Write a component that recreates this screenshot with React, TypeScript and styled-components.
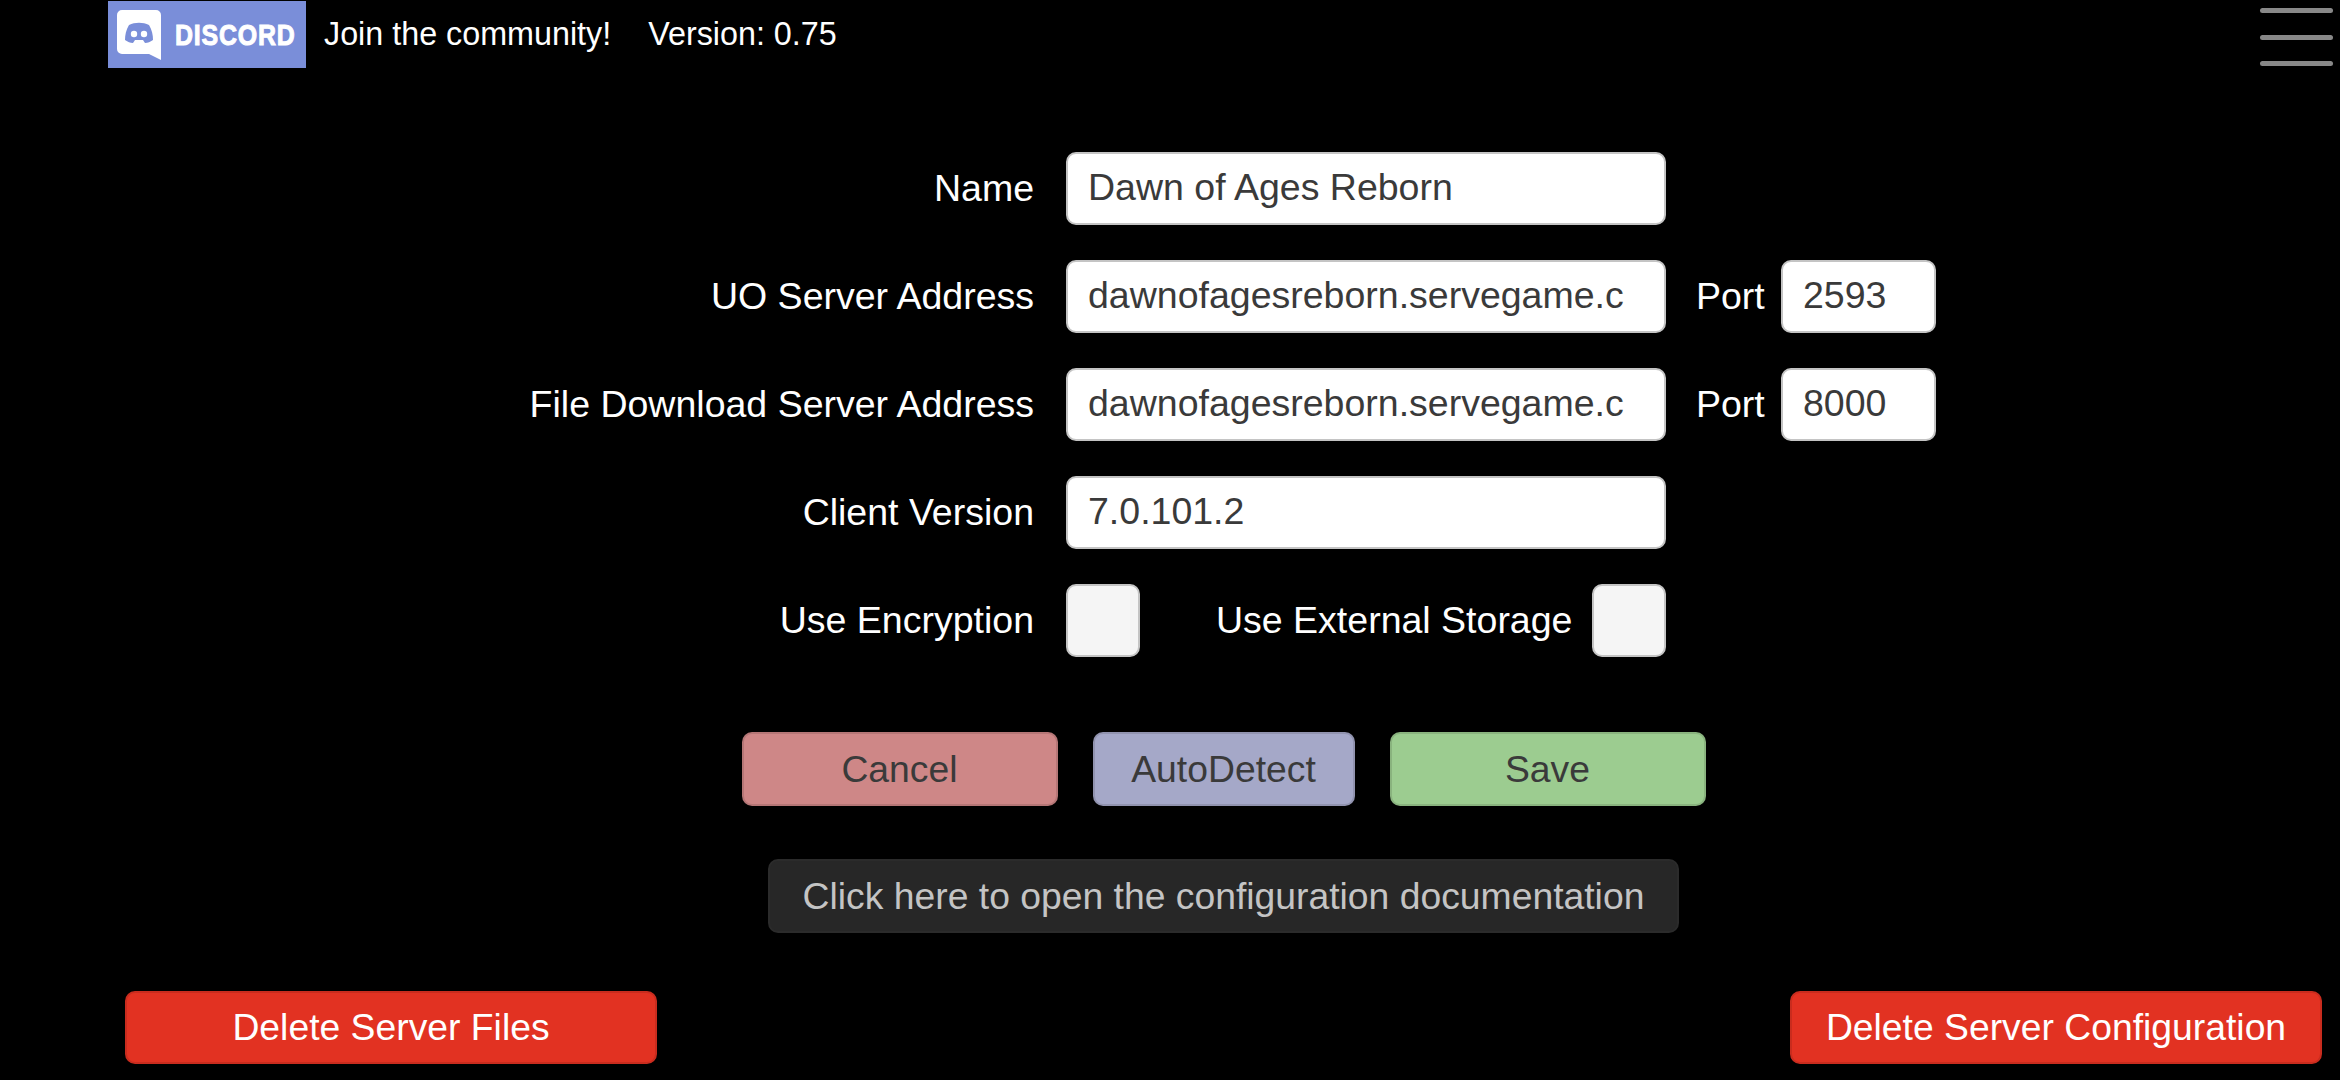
import React from "react";
import styled, { createGlobalStyle } from "styled-components";

const GlobalStyle = createGlobalStyle`
  html, body {
    margin: 0;
    padding: 0;
    background: #000;
    font-family: "Liberation Sans", Arial, sans-serif;
  }
`;

const Page = styled.div`
  width: 2340px;
  height: 1080px;
  background: #000;
  display: flex;
  flex-direction: column;
  overflow: hidden;
  color: #fff;
`;

const TopBar = styled.div`
  height: 68px;
  display: flex;
  align-items: center;
  padding: 0 7px 0 108px;
`;

const DiscordBadge = styled.div`
  width: 198px;
  height: 67px;
  margin-top: 1px;
  background: #7a8ed9;
  display: flex;
  align-items: center;
  padding-left: 9px;
  gap: 14px;
  box-sizing: border-box;
  flex-shrink: 0;
  overflow: hidden;
`;

const DiscordLogo = styled.svg`
  flex: 0 0 44px;
`;

const DiscordWord = styled.span`
  flex: 0 0 auto;
  font-size: 30px;
  font-weight: 700;
  letter-spacing: 1px;
  color: #fff;
  -webkit-text-stroke: 1px #fff;
  transform: scaleX(0.83);
  transform-origin: left center;
`;

const TopText = styled.span<{ $gap: number }>`
  font-size: 32.3px;
  margin: 1px 0 0 ${(p) => p.$gap}px;
  white-space: nowrap;
`;

const Burger = styled.div`
  margin-left: auto;
  width: 73px;
  height: 68px;
  display: flex;
  flex-direction: column;
  gap: 21.5px;
  padding-top: 8px;
  box-sizing: border-box;
`;

const BurgerLine = styled.div`
  height: 5px;
  border-radius: 3px;
  background: #888;
`;

const Form = styled.div`
  margin-top: 84px;
  display: flex;
  flex-direction: column;
  gap: 35px;
`;

const Row = styled.div`
  display: flex;
  align-items: center;
  height: 73px;
`;

const Label = styled.div`
  width: 1034px;
  margin-right: 32px;
  text-align: right;
  font-size: 37.5px;
  flex-shrink: 0;
`;

const Input = styled.div<{ $w: number }>`
  width: ${(p) => p.$w}px;
  height: 73px;
  box-sizing: border-box;
  background: #fff;
  border: 2px solid #c4c4c4;
  border-radius: 10px;
  padding: 0 0 3px 20px;
  display: flex;
  align-items: center;
  color: #3a3a3a;
  font-size: 37.5px;
  white-space: nowrap;
  overflow: hidden;
`;

const PortLabel = styled.div`
  font-size: 37.5px;
  width: 85px;
  margin-left: 30px;
`;

const Check = styled.div`
  width: 74px;
  height: 73px;
  box-sizing: border-box;
  background: #f5f5f5;
  border: 2px solid #c4c4c4;
  border-radius: 10px;
  flex-shrink: 0;
`;

const StorageLabel = styled.div`
  font-size: 37.5px;
  margin-left: 76px;
  width: 376px;
  white-space: nowrap;
`;

const Lower = styled.div`
  margin-top: 75px;
  padding-left: 107px;
  display: flex;
  flex-direction: column;
  align-items: center;
  gap: 53px;
`;

const Actions = styled.div`
  display: flex;
  gap: 35px;
`;

const ActionButton = styled.div<{ $bg: string; $w: number }>`
  width: ${(p) => p.$w}px;
  height: 74px;
  box-sizing: border-box;
  background: ${(p) => p.$bg};
  border: 2px solid rgba(0, 0, 0, 0.12);
  border-radius: 10px;
  color: #3a3a3a;
  font-size: 37.3px;
  display: flex;
  align-items: center;
  justify-content: center;
`;

const DocsButton = styled.div`
  width: 911px;
  height: 74px;
  box-sizing: border-box;
  background: #272727;
  border: 2px solid #2b2b2b;
  border-radius: 10px;
  color: #c4c4c4;
  font-size: 37.3px;
  display: flex;
  align-items: center;
  justify-content: center;
`;

const Footer = styled.div`
  margin-top: 58px;
  display: flex;
  justify-content: space-between;
  padding: 0 18px 0 125px;
`;

const DangerButton = styled.div`
  width: 532px;
  height: 73px;
  box-sizing: border-box;
  background: #e23222;
  border: 2px solid #c92c1e;
  border-radius: 10px;
  color: #fff;
  font-size: 37.3px;
  display: flex;
  align-items: center;
  justify-content: center;
`;

const DiscordIcon = () => (
  <DiscordLogo width="44" height="50" viewBox="0 0 44 50">
    <path
      d="M5 0h34a5 5 0 0 1 5 5v45l-12-6H5a5 5 0 0 1-5-5V5a5 5 0 0 1 5-5z"
      fill="#fff"
    />
    <path
      d="M12 15c6-3 14-3 20 0 3 5 4 10 4 15-3 2-5 3-8 3l-2-3h-8l-2 3c-3 0-5-1-8-3 0-5 1-10 4-15z"
      fill="#7a8ed9"
    />
    <circle cx="17" cy="24" r="3.2" fill="#fff" />
    <circle cx="27" cy="24" r="3.2" fill="#fff" />
  </DiscordLogo>
);

export default function App() {
  return (
    <Page>
      <GlobalStyle />
      <TopBar>
        <DiscordBadge>
          <DiscordIcon />
          <DiscordWord>DISCORD</DiscordWord>
        </DiscordBadge>
        <TopText $gap={18}>Join the community!</TopText>
        <TopText $gap={37}>Version: 0.75</TopText>
        <Burger>
          <BurgerLine />
          <BurgerLine />
          <BurgerLine />
        </Burger>
      </TopBar>
      <Form>
        <Row>
          <Label>Name</Label>
          <Input $w={600}>Dawn of Ages Reborn</Input>
        </Row>
        <Row>
          <Label>UO Server Address</Label>
          <Input $w={600}>dawnofagesreborn.servegame.c</Input>
          <PortLabel>Port</PortLabel>
          <Input $w={155}>2593</Input>
        </Row>
        <Row>
          <Label>File Download Server Address</Label>
          <Input $w={600}>dawnofagesreborn.servegame.c</Input>
          <PortLabel>Port</PortLabel>
          <Input $w={155}>8000</Input>
        </Row>
        <Row>
          <Label>Client Version</Label>
          <Input $w={600}>7.0.101.2</Input>
        </Row>
        <Row>
          <Label>Use Encryption</Label>
          <Check />
          <StorageLabel>Use External Storage</StorageLabel>
          <Check />
        </Row>
      </Form>
      <Lower>
        <Actions>
          <ActionButton $bg="#ce8787" $w={316}>Cancel</ActionButton>
          <ActionButton $bg="#a5a8c8" $w={262}>AutoDetect</ActionButton>
          <ActionButton $bg="#9ccc90" $w={316}>Save</ActionButton>
        </Actions>
        <DocsButton>Click here to open the configuration documentation</DocsButton>
      </Lower>
      <Footer>
        <DangerButton>Delete Server Files</DangerButton>
        <DangerButton>Delete Server Configuration</DangerButton>
      </Footer>
    </Page>
  );
}
